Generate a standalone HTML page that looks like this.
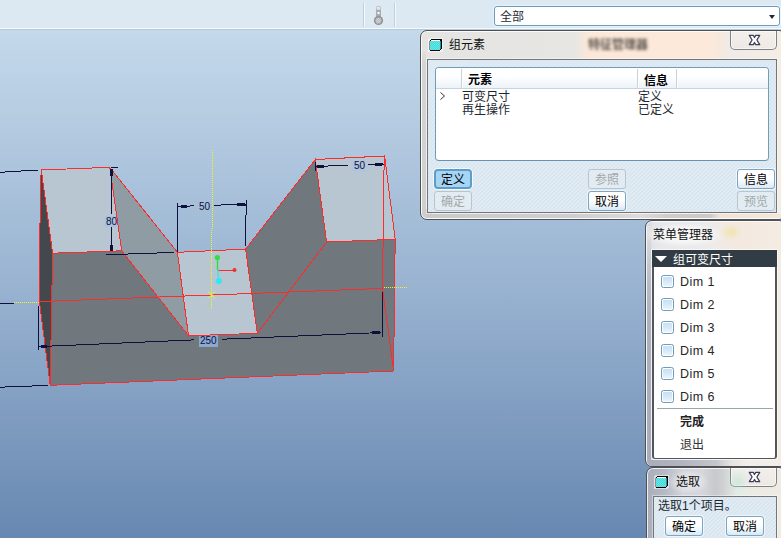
<!DOCTYPE html>
<html><head><meta charset="utf-8"><title>Pro/ENGINEER</title>
<style>
html,body{margin:0;padding:0;}
body{width:781px;height:538px;overflow:hidden;position:relative;background:#c4d9ea;font-family:"Liberation Sans",sans-serif;font-size:12px;}
div{position:absolute;box-sizing:border-box;}
#toolbar{left:0;top:0;width:781px;height:29px;background:#dce9f3;border-bottom:1px solid #f6fafc;}
#viewport{left:0;top:29px;width:781px;height:509px;background:linear-gradient(#c4d9ea 0,#99b3d1 50%,#6888b1 100%);border-top:1px solid #b3c9dc;}
.sep{top:3px;width:2px;height:24px;background:#c3ced9;border-right:1px solid #f4f8fb;}
#combo{left:494px;top:6px;width:286px;height:20px;border:1px solid #6c9cba;border-radius:3px;background:#fff;box-shadow:0 0 0 1px rgba(235,243,249,.9);}
#combo i{position:absolute;right:4px;top:8px;width:0;height:0;border-left:3.5px solid transparent;border-right:3.5px solid transparent;border-top:4px solid #1c2a38;}
svg.layer{position:absolute;left:0;top:0;}
svg.layer text{font-family:"Liberation Sans","Noto Sans CJK SC",sans-serif;}
.win{border:1px solid #4e5054;border-radius:7px;box-shadow:inset 0 0 0 1px rgba(255,255,255,.8);}
#dlg{left:420px;top:30px;width:366px;height:190px;background:linear-gradient(90deg,#e4e4e2 0,#e7e6e3 154px,#f1e7de 160px,#fbe8d8 167px,#fce9da 290px,#f6e9de 299px,#f0ebe6 308px,#f2ece6 340px,#f6ede4 361px);}
#dlgL{left:422px;top:52px;width:4px;height:161px;background:linear-gradient(#e0e0df 0,#d5d5d5 12px,#cfcfd0 100%);}
#dlgB{left:427px;top:214px;width:354px;height:4px;background:linear-gradient(90deg,#cbcbcc 0,#cfcfcf 150px,#dcdcdc 215px,#cdcdcd 240px,#cacaca 283px,#f0e4d9 293px,#f3e6da 100%);}
#dlgBL{left:422px;top:209px;width:10px;height:9px;border-radius:0 0 0 5px;background:#cdcdce;}
.panel{border:1px solid #727579;box-shadow:0 0 0 1px rgba(255,255,255,.4);background:repeating-linear-gradient(135deg,#d9e6f0 0,#d9e6f0 1.4px,#e0ebf3 1.4px,#e0ebf3 2.83px);}
#dlgpanel{left:427px;top:59px;width:350px;height:154px;}
#list{left:435px;top:67px;width:334px;height:94px;border:1px solid #6f9cb8;border-bottom-color:#6793b0;border-radius:4px;background:#fff;}
#lhead{left:0;top:0;width:332px;height:21px;background:linear-gradient(#fff 0,#fff 40%,#ecf2f8 100%);border-bottom:1px solid #c6d4e0;border-radius:3px 3px 0 0;}
.hsep{top:1px;width:2px;height:19px;background:#c8d2dc;border-right:1px solid #fff;}
.btn{width:38px;height:20px;border:1px solid #7ba5c2;border-radius:3px;background:linear-gradient(#fff 0,#fff 45%,#d9e9f6 100%);box-shadow:0 0 0 1px rgba(255,255,255,.55);}
.btn.dis{border-color:#bac4ca;background:rgba(230,238,243,.55);box-shadow:none;}
.btn.sel{border:2px solid #5f9cc6;background:#a5d5f5;box-shadow:0 0 0 1px #f2f8fc;border-radius:4px;}
#mm{left:645px;top:220px;width:141px;height:247px;background:linear-gradient(90deg,#cfd2da 0,#e4e5e9 7px,#e9e9ec 20px,#ebebed 62px,#f1eae3 76px,#f3e9df 90px,#f4ebe3 136px);}
#mmL{left:647px;top:226px;width:4px;height:235px;background:linear-gradient(#e2e3e6 0,#cdcfd6 28px,#b8bbc5 58px,#adb1bd 100px,#a9adb9 100%);}
#mmB{left:647px;top:460px;width:134px;height:6px;background:linear-gradient(90deg,#a9adb9 0,#b4b7c1 40px,#c6c7cc 70px,#e6e2de 84px,#f2ede8 100px,#f2ede8 100%);border-radius:0 0 0 5px;}
#mmbody{left:652px;top:250px;width:125px;height:209px;background:#fff;border:1px solid #50565c;border-left-width:2px;border-right-width:2px;border-radius:0 0 3px 3px;box-shadow:0 0 0 1px rgba(255,255,255,.6);}
#mmhead{left:652px;top:250px;width:125px;height:17px;background:#323c44;}
#mmhead i{position:absolute;left:2.6px;top:6px;width:0;height:0;border-left:6.2px solid transparent;border-right:6.2px solid transparent;border-top:6.2px solid #fff;}
.cb{left:661px;width:13px;height:13px;border:1px solid #6f9cb6;border-radius:2.5px;background:linear-gradient(#c4dff4 0,#d6e8f7 50%,#eef6fc 100%);box-shadow:inset 0 0 0 1px #fbfdfe;}
.dim{left:680px;font-size:12.5px;letter-spacing:.45px;color:#262626;line-height:14px;white-space:nowrap;}
#mmsep{left:657px;top:408px;width:116px;height:1px;background:#9aa7a7;}
#sel{left:646px;top:467px;width:140px;height:90px;background:linear-gradient(90deg,#aaaebb 0,#b6bac5 18px,#d3d5db 36px,#d6d7dc 55px,#c8c9ce 68px,#cfd0d2 76px,#e4ece6 90px,#ebeae4 104px,#f0ebe4 135px);}
#selpanel{left:653px;top:496px;width:124px;height:60px;}
.close{left:730px;width:47px;height:19px;border:1px solid #808286;border-top:none;border-radius:0 0 5px 5px;background:linear-gradient(rgba(243,240,237,.8),rgba(236,231,226,.6));box-shadow:inset 0 0 0 1px rgba(255,255,255,.55);}
.glow{background:radial-gradient(ellipse at center,rgba(255,255,255,.75) 0,rgba(255,255,255,.55) 45%,rgba(255,255,255,0) 75%);}
</style></head>
<body>
<div id="toolbar"></div>
<div id="viewport"></div>
<div class="sep" style="left:363px"></div><div class="sep" style="left:394px"></div>
<div id="combo"><i></i></div>
<svg class="layer" width="781" height="538" viewBox="0 0 781 538">
<defs><pattern id="dither" width="2" height="2" patternUnits="userSpaceOnUse"><rect width="1" height="1" fill="#9cd0d0"/><rect x="1" y="1" width="1" height="1" fill="#9cd0d0"/></pattern></defs>
<rect x="369" y="6" width="19" height="19" fill="#dee9f2"/>
<rect x="376" y="9.5" width="5" height="8" fill="#a9adb0"/>
<rect x="376.4" y="6.4" width="4.2" height="3.6" rx="1" fill="#e4e8eb" stroke="#b0b4b8" stroke-width=".8"/>
<rect x="377.5" y="12" width="2" height="2" fill="#fff"/>
<circle cx="378.5" cy="20.5" r="4.6" fill="#8e9296"/>
<circle cx="378.5" cy="20.5" r="3.1" fill="#b9bdc0"/>
<path d="M376.5 22.5l4-4M377.5 23.5l3-3M376 21l3-3" stroke="#d8dcdf" stroke-width=".7"/>
<text x="500" y="20.5" font-size="12" fill="#1e2c36">全部</text>
<polygon points="41.3,170 52.6,253.2 50.2,385.3 39.4,301.6 40.3,187" fill="#42484c"/>
<polygon points="52.6,253.2 121.7,250.8 188.5,335.75 257.3,333.35 326.6,242 395.2,239.3 393.6,371 50.2,385.3" fill="#70787e"/>
<polygon points="41.3,170 109.7,167.3 121.7,250.8 52.6,253.2" fill="#b7c6d1"/>
<polygon points="109.7,167.3 177.4,252.3 188.5,335.75 121.7,250.8" fill="#8f9ca3"/>
<polygon points="177.4,252.3 245.6,249.1 257.3,333.35 188.5,335.75" fill="#b7c6d1"/>
<polygon points="245.6,249.1 315.3,159.5 326.6,242 257.3,333.35" fill="#70787e"/>
<polygon points="315.3,159.5 384.6,156 395.2,239.3 326.6,242" fill="#b7c6d1"/><rect x="105" y="216" width="12" height="11" fill="#a9c1df"/>
<rect x="352" y="161" width="13" height="11" fill="#aec5e0"/>
<rect x="199" y="335" width="19" height="12" fill="#8ba8d0"/>
<text x="106" y="224.500" font-size="10" fill="#10103c">80</text>
<text x="199" y="209.500" font-size="10" fill="#10103c">50</text>
<text x="354" y="168.500" font-size="10" fill="#10103c">50</text>
<text x="200" y="343.500" font-size="10" fill="#10103c">250</text>
<polyline points="41.3,170 109.7,167.3 121.7,250.8 52.6,253.2 41.3,170" fill="none" stroke="#fa2c2c" stroke-width="1" shape-rendering="crispEdges" />
<polyline points="41.3,170 40.3,187 39.4,301.6 50.2,385.3 52.6,253.2" fill="none" stroke="#fa2c2c" stroke-width="1" shape-rendering="crispEdges" />
<polyline points="109.7,167.3 177.4,252.3 188.5,335.75 121.7,250.8" fill="none" stroke="#fa2c2c" stroke-width="1" shape-rendering="crispEdges" />
<polyline points="177.4,252.3 245.6,249.1 257.3,333.35 188.5,335.75" fill="none" stroke="#fa2c2c" stroke-width="1" shape-rendering="crispEdges" />
<polyline points="245.6,249.1 315.3,159.5 326.6,242 257.3,333.35" fill="none" stroke="#fa2c2c" stroke-width="1" shape-rendering="crispEdges" />
<polyline points="315.3,159.5 384.6,156 395.2,239.3 326.6,242" fill="none" stroke="#fa2c2c" stroke-width="1" shape-rendering="crispEdges" />
<polyline points="315.3,159.5 375.8,156.4 384.6,156" fill="none" stroke="#fa2c2c" stroke-width="1" shape-rendering="crispEdges" />
<polyline points="395.2,239.3 393.6,371 50.2,385.3" fill="none" stroke="#fa2c2c" stroke-width="1" shape-rendering="crispEdges" />
<polyline points="39.4,301.6 211.2,295 382.5,288.4" fill="none" stroke="#fa2c2c" stroke-width="1" shape-rendering="crispEdges" />
<polyline points="384.2,156 382.5,288.4 393,366" fill="none" stroke="#fa2c2c" stroke-width="1" shape-rendering="crispEdges" />
<polyline points="0,172.3 38,170" fill="none" stroke="#10103c" stroke-width="1" shape-rendering="crispEdges" />
<polyline points="0,303.5 14.3,303.5" fill="none" stroke="#10103c" stroke-width="1" shape-rendering="crispEdges" />
<polyline points="0,387.2 48,385.4" fill="none" stroke="#10103c" stroke-width="1" shape-rendering="crispEdges" />
<polyline points="38.8,306 38.6,350.5" fill="none" stroke="#10103c" stroke-width="1" shape-rendering="crispEdges" />
<polyline points="38.6,346.6 194,339.9" fill="none" stroke="#10103c" stroke-width="1" shape-rendering="crispEdges" />
<polyline points="222.4,339.2 381.5,332.5" fill="none" stroke="#10103c" stroke-width="1" shape-rendering="crispEdges" />
<polyline points="382.3,291.5 382.3,336.5" fill="none" stroke="#10103c" stroke-width="1" shape-rendering="crispEdges" />
<polyline points="41,346.4 47,346.2" fill="none" stroke="#10103c" stroke-width="3" shape-rendering="crispEdges" />
<polyline points="372,333 380,332.6" fill="none" stroke="#10103c" stroke-width="3" shape-rendering="crispEdges" />
<polyline points="111.2,168.6 111.4,214.5" fill="none" stroke="#10103c" stroke-width="1" shape-rendering="crispEdges" />
<polyline points="111.4,227 111.5,250" fill="none" stroke="#10103c" stroke-width="1" shape-rendering="crispEdges" />
<polyline points="110.5,167.3 117.5,167.3" fill="none" stroke="#10103c" stroke-width="1" shape-rendering="crispEdges" />
<polyline points="106,254.8 173.7,252.4" fill="none" stroke="#10103c" stroke-width="1" shape-rendering="crispEdges" />
<polyline points="111.2,169 111.2,176" fill="none" stroke="#10103c" stroke-width="3" shape-rendering="crispEdges" />
<polyline points="111.5,245 111.5,251" fill="none" stroke="#10103c" stroke-width="3" shape-rendering="crispEdges" />
<polyline points="177.4,203 177.4,252" fill="none" stroke="#10103c" stroke-width="1" shape-rendering="crispEdges" />
<polyline points="246.5,199.8 245,247" fill="none" stroke="#10103c" stroke-width="1" shape-rendering="crispEdges" />
<polyline points="177.4,206.7 194,205.8" fill="none" stroke="#10103c" stroke-width="1" shape-rendering="crispEdges" />
<polyline points="214,205.2 246.5,204.3" fill="none" stroke="#10103c" stroke-width="1" shape-rendering="crispEdges" />
<polyline points="181,206.4 187,206.1" fill="none" stroke="#10103c" stroke-width="3" shape-rendering="crispEdges" />
<polyline points="237.4,204.6 245.5,204.4" fill="none" stroke="#10103c" stroke-width="3" shape-rendering="crispEdges" />
<polyline points="315.5,161.5 315.5,170.7" fill="none" stroke="#10103c" stroke-width="1" shape-rendering="crispEdges" />
<polyline points="316,166.6 348,165" fill="none" stroke="#10103c" stroke-width="1" shape-rendering="crispEdges" />
<polyline points="368,164.2 384,164" fill="none" stroke="#10103c" stroke-width="1" shape-rendering="crispEdges" />
<polyline points="317,166.5 324,166.2" fill="none" stroke="#10103c" stroke-width="3" shape-rendering="crispEdges" />
<polyline points="375,164.1 383.5,164" fill="none" stroke="#10103c" stroke-width="3" shape-rendering="crispEdges" />
<path d="M212.5 150V230M211.5 230V310" stroke="#f4f420" stroke-width="1" stroke-dasharray="1 1" fill="none" shape-rendering="crispEdges"/>
<path d="M14 302.5H39" stroke="#f4f420" stroke-width="1" stroke-dasharray="1 1" fill="none" shape-rendering="crispEdges"/>
<path d="M384 287.5H407" stroke="#f4f420" stroke-width="1" stroke-dasharray="1 1" fill="none" shape-rendering="crispEdges"/>
<path d="M208 291.5l7 7M215 291.5l-7 7" stroke="#f4f420" stroke-width="1" fill="none"/><path d="M217.500 258V270" stroke="#30e040" stroke-width="1.4"/>
<path d="M217.700 270.500H234" stroke="#f03030" stroke-width="1"/>
<path d="M217.700 270L218.800 281" stroke="#30e8f0" stroke-width="1.4"/>
<circle cx="217.4" cy="257.5" r="2.6" fill="#30e040"/>
<circle cx="234.5" cy="270" r="2" fill="#f03030"/>
<circle cx="218.8" cy="281" r="3" fill="#30e8f0"/>
</svg>
<div class="win" id="dlg"></div><div id="dlgL"></div><div id="dlgBL"></div><div id="dlgB"></div>
<div class="panel" id="dlgpanel"></div>
<div class="close" style="top:31px"></div>
<div id="list"><div id="lhead"><div class="hsep" style="left:25px"></div><div class="hsep" style="left:201px"></div><div class="hsep" style="left:240px"></div></div></div>
<div class="btn sel" style="left:434px;top:169px"></div>
<div class="btn dis" style="left:434px;top:191px"></div>
<div class="btn dis" style="left:588px;top:169px"></div>
<div class="btn" style="left:588px;top:191px"></div>
<div class="btn" style="left:737px;top:169px"></div>
<div class="btn dis" style="left:737px;top:191px"></div>
<div class="win" id="mm"></div><div id="mmL"></div><div id="mmB"></div>
<div class="glow" style="left:646px;top:224px;width:76px;height:22px"></div>
<div id="mmbody"></div><div id="mmhead"><i></i></div>
<div class="cb" style="top:275px"></div><div class="dim" style="top:274.6px">Dim 1</div><div class="cb" style="top:298px"></div><div class="dim" style="top:297.6px">Dim 2</div><div class="cb" style="top:321px"></div><div class="dim" style="top:320.6px">Dim 3</div><div class="cb" style="top:344px"></div><div class="dim" style="top:343.6px">Dim 4</div><div class="cb" style="top:367px"></div><div class="dim" style="top:366.6px">Dim 5</div><div class="cb" style="top:390px"></div><div class="dim" style="top:389.6px">Dim 6</div>
<div id="mmsep"></div>
<div class="win" id="sel"></div>
<div class="glow" style="left:668px;top:471px;width:40px;height:22px;opacity:.55"></div>
<div class="panel" id="selpanel"></div>
<div class="close" style="top:468px"></div>
<div class="btn" style="left:665px;top:516px"></div>
<div class="btn" style="left:726px;top:516px"></div>
<svg class="layer" width="781" height="538" viewBox="0 0 781 538">
<defs><filter id="blur" x="-20%" y="-100%" width="140%" height="300%"><feGaussianBlur stdDeviation="1.7"/></filter>
<filter id="blur2" x="-50%" y="-50%" width="200%" height="200%"><feGaussianBlur stdDeviation="3"/></filter></defs>
<g filter="url(#blur)" opacity=".9"><text x="588" y="48.500" font-size="12" font-weight="bold" fill="#4a423c">特征管理器</text></g>
<ellipse cx="731" cy="232" rx="7" ry="3.5" fill="#efe08c" opacity=".8" filter="url(#blur2)"/>
<ellipse cx="738" cy="481" rx="5" ry="7" fill="#bfe8d4" opacity=".7" filter="url(#blur2)"/>
<g transform="translate(429,39)" shape-rendering="crispEdges"><rect x="-1" y="-1" width="15" height="14" rx="2" fill="#fff" opacity=".55"/><rect x="2" y="0" width="11" height="1" fill="#000"/><rect x="1" y="1" width="1" height="1" fill="#000"/><rect x="2" y="1" width="9" height="1" fill="#fff"/><rect x="11" y="1" width="2" height="1" fill="#000"/><rect x="12" y="0" width="1" height="10" fill="#000"/><rect x="1" y="2" width="10" height="9" fill="#10f2f2"/><rect x="1" y="2" width="10" height="9" fill="url(#dither)"/><rect x="11" y="2" width="1" height="8" fill="#189a9a"/><rect x="0" y="2" width="1" height="9" fill="#8e8e8e"/><rect x="1" y="11" width="10" height="1" fill="#000"/><rect x="11" y="10" width="1" height="1" fill="#000"/></g>
<text x="449" y="49" font-size="12" fill="#111">组元素</text>
<g transform="translate(754.5,40)"><path d="M-5.200 -4.600h4L0 -2.500 1.200 -4.600h4L2.400 0 5.200 4.600h-4L0 2.500 -1.200 4.600h-4L-2.400 0Z" fill="#fdfdfd" stroke="#3a3d58" stroke-width="1.25" stroke-linejoin="round"/></g>
<text x="468" y="84" font-size="12" font-weight="bold" fill="#000">元素</text>
<text x="644" y="85" font-size="12" font-weight="bold" fill="#000">信息</text>
<path d="M440.500 92.500l4 3.500l-4 3.500" fill="none" stroke="#333" stroke-width="1"/>
<text x="462" y="101" font-size="12" fill="#1c2830">可变尺寸</text>
<text x="462" y="114" font-size="12" fill="#1c2830">再生操作</text>
<text x="638" y="101" font-size="12" fill="#1c2830">定义</text>
<text x="638" y="114" font-size="12" fill="#1c2830">已定义</text>
<text x="441" y="184" font-size="12" fill="#000">定义</text>
<text x="441" y="206" font-size="12" fill="#a4a8aa">确定</text>
<text x="595" y="184" font-size="12" fill="#a4a8aa">参照</text>
<text x="595" y="206" font-size="12" fill="#000">取消</text>
<text x="744" y="184" font-size="12" fill="#000">信息</text>
<text x="744" y="206" font-size="12" fill="#a4a8aa">预览</text>
<text x="653" y="239" font-size="12" fill="#111">菜单管理器</text>
<text x="673" y="263.500" font-size="12" fill="#fff">组可变尺寸</text>
<text x="680" y="426" font-size="12" font-weight="bold" fill="#222">完成</text>
<text x="680" y="449" font-size="12" fill="#333">退出</text>
<g transform="translate(655,476)" shape-rendering="crispEdges"><rect x="-1" y="-1" width="15" height="14" rx="2" fill="#fff" opacity=".55"/><rect x="2" y="0" width="11" height="1" fill="#000"/><rect x="1" y="1" width="1" height="1" fill="#000"/><rect x="2" y="1" width="9" height="1" fill="#fff"/><rect x="11" y="1" width="2" height="1" fill="#000"/><rect x="12" y="0" width="1" height="10" fill="#000"/><rect x="1" y="2" width="10" height="9" fill="#10f2f2"/><rect x="1" y="2" width="10" height="9" fill="url(#dither)"/><rect x="11" y="2" width="1" height="8" fill="#189a9a"/><rect x="0" y="2" width="1" height="9" fill="#8e8e8e"/><rect x="1" y="11" width="10" height="1" fill="#000"/><rect x="11" y="10" width="1" height="1" fill="#000"/></g>
<text x="676" y="486" font-size="12" fill="#111">选取</text>
<g transform="translate(754.5,477)"><path d="M-5.200 -4.600h4L0 -2.500 1.200 -4.600h4L2.400 0 5.200 4.600h-4L0 2.500 -1.200 4.600h-4L-2.400 0Z" fill="#fdfdfd" stroke="#3a3d58" stroke-width="1.25" stroke-linejoin="round"/></g>
<text x="658" y="509.500" font-size="12" fill="#1c2830">选取1个项目。</text>
<text x="672" y="531" font-size="12" fill="#000">确定</text>
<text x="733" y="531" font-size="12" fill="#000">取消</text>
</svg>
</body></html>
